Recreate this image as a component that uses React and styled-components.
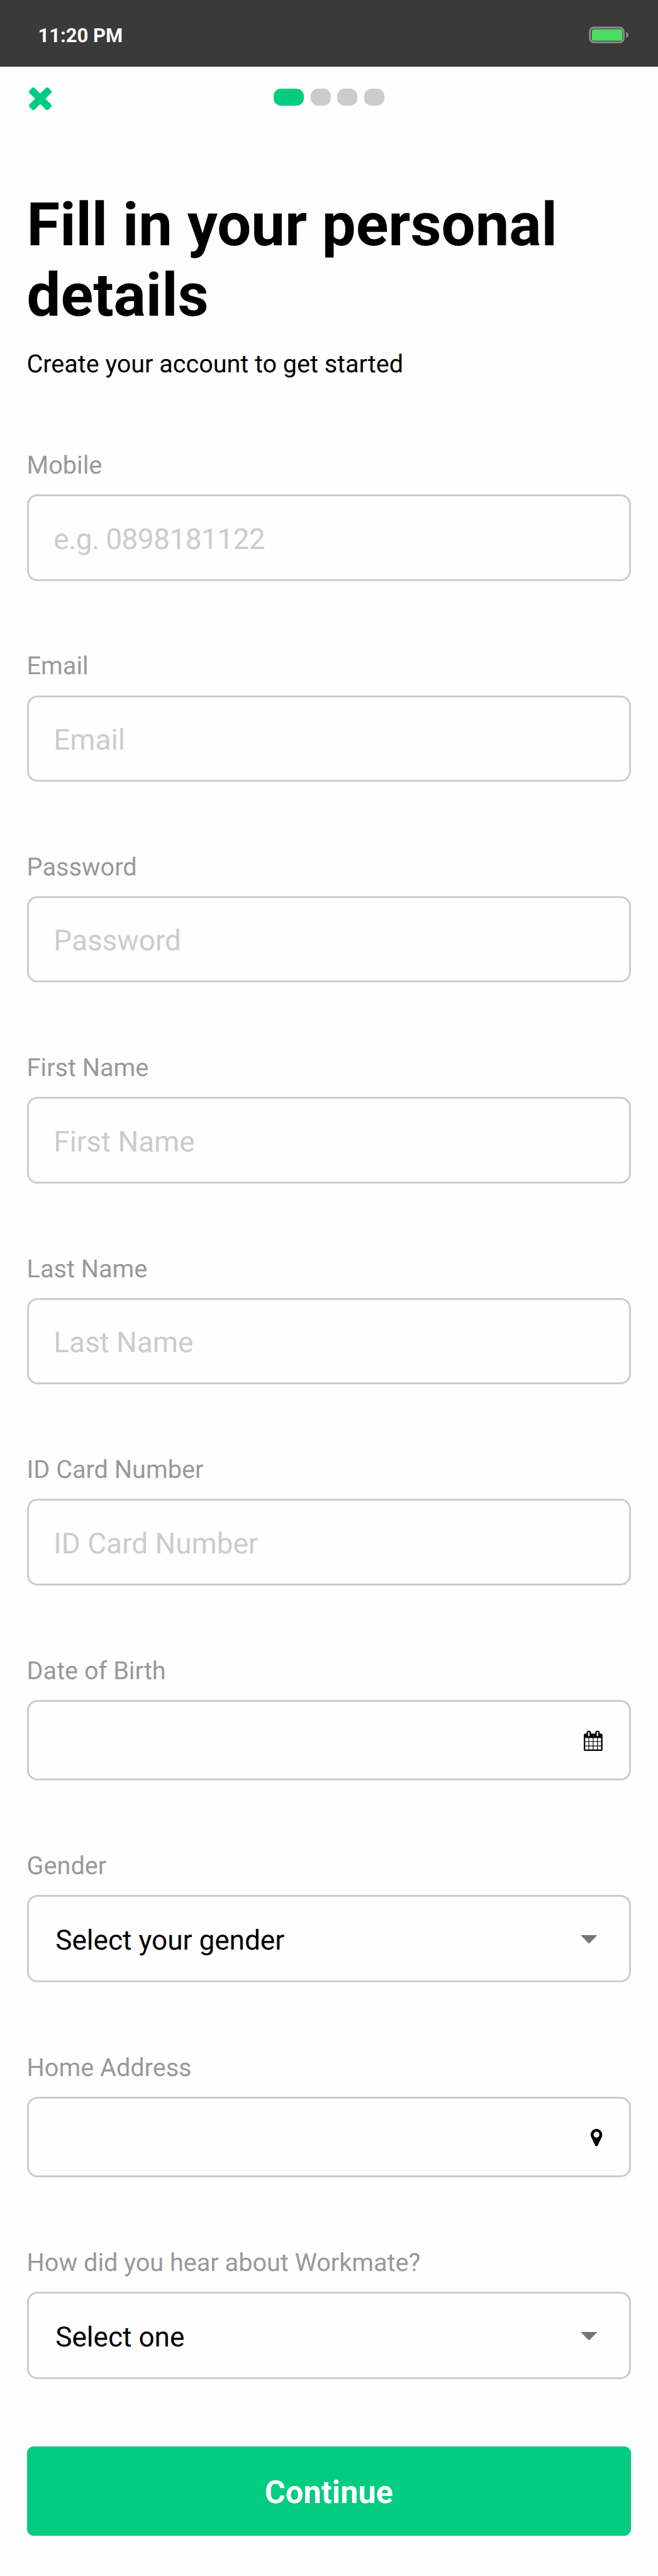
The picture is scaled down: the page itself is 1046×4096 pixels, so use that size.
import React from 'react';
import styled, { createGlobalStyle } from 'styled-components';

const px = (n) => `${(n * 0.9681).toFixed(2)}px`;

const colors = {
  brand: '#02cc82',
  line: '#cccccc',
  label: '#999999',
  caret: '#757575',
  bar: '#3a3a3a',
};

const GlobalStyle = createGlobalStyle`
  * { box-sizing: border-box; }
  body {
    margin: 0;
    background: #fefefe;
    color: #000;
    font-family: Roboto, "Liberation Sans", sans-serif;
    text-rendering: geometricPrecision;
  }
`;

const Screen = styled.div`
  display: flex;
  flex-direction: column;
  width: 100%;
  height: 4096px;
  overflow: hidden;
`;

const StatusBar = styled.header`
  display: flex;
  align-items: center;
  justify-content: space-between;
  flex: none;
  height: ${px(110)};
  padding: ${px(8)} ${px(47.5)} 0 ${px(62.5)};
  background: ${colors.bar};
  color: #fff;
`;

const Clock = styled.time`
  font-size: ${px(32)};
  font-weight: 700;
  line-height: ${px(38)};
`;

const BatteryIcon = styled.svg`
  width: ${px(66)};
  height: ${px(28)};
  margin-bottom: ${px(3.5)};
`;

const NavBar = styled.nav`
  display: grid;
  grid-template-columns: 1fr auto 1fr;
  align-items: start;
  flex: none;
  height: ${px(202)};
  padding: ${px(33.7)} ${px(47)} 0;
`;

const CloseButton = styled.button`
  display: flex;
  justify-self: start;
  padding: 0;
  border: 0;
  background: none;
  color: ${colors.brand};

  svg {
    width: ${px(37.2)};
    height: ${px(37.2)};
  }
`;

const Steps = styled.div`
  display: flex;
  gap: ${px(10.8)};
  padding-top: ${px(2.3)};
`;

const Step = styled.span`
  width: ${(p) => px(p.$active ? 50 : 33.2)};
  height: ${px(28)};
  border-radius: ${px(12)};
  background: ${(p) => (p.$active ? colors.brand : colors.line)};
`;

const Content = styled.main`
  display: flex;
  flex-direction: column;
  padding: 0 ${px(44)};
`;

const Title = styled.h1`
  margin: 0 0 ${px(30.5)};
  font-size: ${px(98.9)};
  font-weight: 700;
  line-height: ${px(116)};
`;

const Subtitle = styled.p`
  margin: 0;
  font-size: ${px(40.8)};
  line-height: ${px(48)};
`;

const Form = styled.form`
  display: flex;
  flex-direction: column;
  gap: ${px(116.6)};
  margin-top: ${px(118.1)};
`;

const Field = styled.div`
  display: flex;
  flex-direction: column;
  gap: ${px(23.4)};
`;

const Label = styled.span`
  color: ${colors.label};
  font-size: ${px(40.95)};
  line-height: ${px(48)};
`;

const Box = styled.div`
  display: flex;
  align-items: center;
  justify-content: space-between;
  height: ${(p) => px(p.$height)};
  padding: 0 ${(p) => px(p.$inset)} 0 ${px(41)};
  border: 3px solid ${colors.line};
  border-radius: ${px(17)};

  svg {
    flex: none;
    margin: ${px(2)} 0 0 auto;
  }
`;

const Placeholder = styled.span`
  padding-top: ${px(6)};
  color: ${colors.line};
  font-size: ${px(47.4)};
  line-height: ${px(56)};
  letter-spacing: ${(p) => (p.$numeric ? '-0.52px' : 'normal')};
`;

const Selected = styled.span`
  padding: ${px(5.6)} 0 0 ${px(3)};
  font-size: ${px(45.6)};
  line-height: ${px(56)};
`;

const CalendarSvg = styled.svg`
  width: ${px(30.8)};
  height: ${px(33.2)};
`;

const PinSvg = styled.svg`
  width: ${px(19)};
  height: ${px(28.5)};
`;

const CaretSvg = styled.svg`
  width: ${px(27.5)};
  height: ${px(14)};
  fill: ${colors.caret};
`;

const Submit = styled.button`
  height: ${px(147.2)};
  margin-top: ${px(-6.2)};
  padding: ${px(6.4)} 0 0;
  border: 0;
  border-radius: ${px(11)};
  background: ${colors.brand};
  color: #fff;
  font-family: inherit;
  font-size: ${px(52.1)};
  font-weight: 700;
  line-height: ${px(62)};
  text-rendering: inherit;
`;

const Battery = () => (
  <BatteryIcon viewBox="0 0 66 28">
    <rect x="1.9" y="1.9" width="55.4" height="24.2" rx="6.5" fill="none" stroke="#8a8a8a" strokeWidth="3.2" />
    <rect x="5" y="4.6" width="50" height="19" rx="3.5" fill="#4cde62" />
    <path d="M61.2 9.2c2.6.8 4 2.6 4 4.8s-1.4 4-4 4.8z" fill="#8a8a8a" />
  </BatteryIcon>
);

const Cross = () => (
  <svg viewBox="302 366 1188 1188" fill="currentColor">
    <path d="M1490 1322q0 40-28 68l-136 136q-28 28-68 28t-68-28l-294-294-294 294q-28 28-68 28t-68-28l-136-136q-28-28-28-68t28-68l294-294-294-294q-28-28-28-68t28-68l136-136q28-28 68-28t68 28l294 294 294-294q28-28 68-28t68 28l136 136q28 28 28 68t-28 68l-294 294 294 294q28 28 28 68z" />
  </svg>
);

const Calendar = () => (
  <CalendarSvg viewBox="64 0 1664 1792">
    <path d="M192 1664h288v-288h-288v288zm352 0h320v-288h-320v288zm-352-352h288v-320h-288v320zm352 0h320v-320h-320v320zm-352-384h288v-288h-288v288zm736 736h320v-288h-320v288zm-384-736h320v-288h-320v288zm768 736h288v-288h-288v288zm-384-352h320v-320h-320v320zm-352-864v-288q0-13-9.5-22.5t-22.5-9.5h-64q-13 0-22.5 9.5t-9.5 22.5v288q0 13 9.5 22.5t22.5 9.5h64q13 0 22.5-9.5t9.5-22.5zm736 864h288v-320h-288v320zm-384-384h320v-288h-320v288zm384 0h288v-288h-288v288zm32-480v-288q0-13-9.5-22.5t-22.5-9.5h-64q-13 0-22.5 9.5t-9.5 22.5v288q0 13 9.5 22.5t22.5 9.5h64q13 0 22.5-9.5t9.5-22.5zm384-64v1280q0 52-38 90t-90 38h-1408q-52 0-90-38t-38-90v-1280q0-52 38-90t90-38h128v-96q0-66 47-113t113-47h64q66 0 113 47t47 113v96h384v-96q0-66 47-113t113-47h64q66 0 113 47t47 113v96h128q52 0 90 38t38 90z" />
  </CalendarSvg>
);

const Pin = () => (
  <PinSvg viewBox="384 128 1024 1536">
    <path d="M1152 640q0-106-75-181t-181-75-181 75-75 181 75 181 181 75 181-75 75-181zm256 0q0 109-33 179l-364 774q-16 33-47.5 52t-67.5 19-67.5-19-46.5-52l-365-774q-33-70-33-179 0-212 150-362t362-150 362 150 150 362z" />
  </PinSvg>
);

const Caret = () => (
  <CaretSvg viewBox="0 0 28 14" preserveAspectRatio="none">
    <path d="M0 0h28L14 14z" />
  </CaretSvg>
);

const fields = [
  { label: 'Mobile', placeholder: 'e.g. 0898181122', numeric: true },
  { label: 'Email', placeholder: 'Email' },
  { label: 'Password', placeholder: 'Password' },
  { label: 'First Name', placeholder: 'First Name' },
  { label: 'Last Name', placeholder: 'Last Name' },
  { label: 'ID Card Number', placeholder: 'ID Card Number' },
  { label: 'Date of Birth', icon: Calendar },
  { label: 'Gender', selected: 'Select your gender' },
  { label: 'Home Address', icon: Pin },
  { label: 'How did you hear about Workmate?', selected: 'Select one' },
];

const FormField = ({ label, placeholder, numeric, selected, icon: Icon }) => (
  <Field>
    <Label>{label}</Label>
    <Box $height={Icon ? 132.8 : selected ? 143 : 142} $inset={selected ? 52 : 44}>
      {placeholder && <Placeholder $numeric={numeric}>{placeholder}</Placeholder>}
      {selected && <Selected>{selected}</Selected>}
      {selected && <Caret />}
      {Icon && <Icon />}
    </Box>
  </Field>
);

export default function App() {
  return (
    <Screen>
      <GlobalStyle />
      <StatusBar>
        <Clock>11:20 PM</Clock>
        <Battery />
      </StatusBar>
      <NavBar>
        <CloseButton type="button" aria-label="Close">
          <Cross />
        </CloseButton>
        <Steps>
          <Step $active />
          <Step />
          <Step />
          <Step />
        </Steps>
      </NavBar>
      <Content>
        <Title>Fill in your personal details</Title>
        <Subtitle>Create your account to get started</Subtitle>
        <Form>
          {fields.map((field) => (
            <FormField key={field.label} {...field} />
          ))}
          <Submit type="button">Continue</Submit>
        </Form>
      </Content>
    </Screen>
  );
}
